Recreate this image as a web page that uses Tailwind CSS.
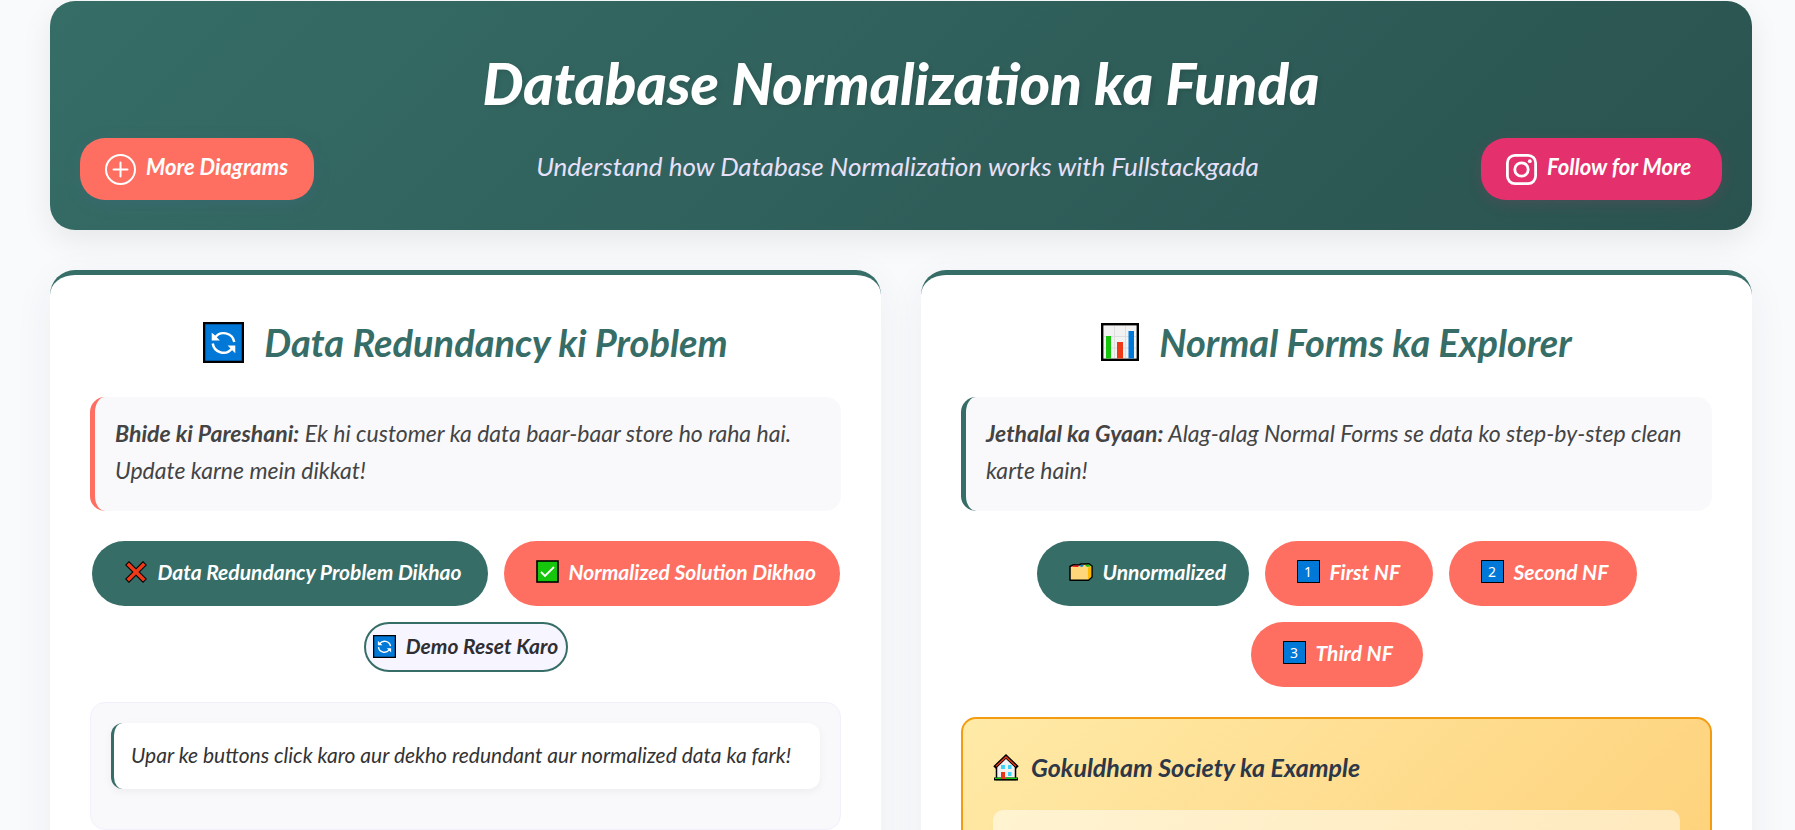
<!DOCTYPE html>
<html lang="hi-Latn">
<head>
<meta charset="utf-8">
<meta name="viewport" content="width=device-width, initial-scale=1">
<title>Database Normalization ka Funda</title>
<script src="https://cdn.jsdelivr.net/npm/@tailwindcss/browser@4"></script>
</head>
<body class="h-screen overflow-hidden bg-[#f9fafc] pt-px pr-[43px] pl-[50px] [font-family:Lato,sans-serif] text-[#333333] italic">

<svg class="hidden" aria-hidden="true">
  <symbol id="refresh" viewBox="0 0 40 40">
    <rect x="1" y="1" width="38" height="38" fill="#0078d7" stroke="#000" stroke-width="2.4"/>
    <path d="M11.500 15.500A10.500 10.500 0 0 1 30.500 19.500M9.500 21A10.500 10.500 0 0 0 28.500 25.500" fill="none" stroke="#fff" stroke-width="2.400"/>
    <path d="M8.500 10.500L11 12.500L16.500 18H8.500Z M31.500 30.500L29 28L24 23H31.500Z" fill="#fff"/>
  </symbol>
</svg>

<header class="flex h-[229px] flex-col rounded-[25px] bg-linear-135 from-[#366d67] to-[#2a534f] px-[30px] pt-12 shadow-[0_10px_30px_rgba(0,0,0,0.08)]">
  <h1 class="text-center text-[58px] leading-[68px] font-black text-white [text-shadow:2px_2px_4px_rgba(0,0,0,0.1)]">Database Normalization ka Funda</h1>
  <div class="mt-[21px] flex items-center justify-between">
    <a href="#diagrams" class="flex h-[62px] w-[234px] items-center gap-[10px] rounded-[25px] bg-[#ff6f61] px-[25px] text-[22px] font-bold whitespace-nowrap text-white shadow-[0_4px_15px_rgba(66,108,140,0.3)]">
      <svg class="size-[31px] shrink-0" viewBox="0 0 31 31" fill="none" stroke="#fff" stroke-width="2" stroke-linecap="round"><circle cx="15.500" cy="15.500" r="14.500"/><path d="M15.500 8.500V22.500M8.500 15.500H22.500"/></svg>
      <span class="pb-1.5">More Diagrams</span>
    </a>
    <p class="pb-1.5 text-[26px] leading-8 text-[#e6e0fa]">Understand how Database Normalization works with Fullstackgada</p>
    <a href="#follow" class="flex h-[62px] w-[241px] items-center gap-[10px] rounded-[25px] bg-[#e4306c] px-[25px] text-[22px] font-bold whitespace-nowrap text-white shadow-[0_4px_15px_rgba(228,48,108,0.15)]">
      <svg class="size-[31px] shrink-0" viewBox="0 0 31 31" fill="none" stroke="#fff" stroke-width="2.800"><rect x="1.400" y="1.400" width="28.200" height="28.200" rx="7.500"/><circle cx="15.500" cy="15.500" r="6.700"/><circle cx="23.800" cy="7.200" r="1.900" fill="#fff" stroke="none"/></svg>
      <span class="pb-1.5">Follow for More</span>
    </a>
  </div>
</header>

<main class="mt-10 grid grid-cols-2 gap-10">

  <section class="h-[900px] rounded-[25px] border-t-[5px] border-[#366d67] bg-white px-10 pt-10 shadow-[0_10px_40px_rgba(30,50,70,0.06)]">
    <h2 class="flex h-[54px] items-center justify-center gap-5 text-[38px] leading-[54px] font-bold text-[#366d67]">
      <svg class="size-[41px]" aria-hidden="true"><use href="#refresh"/></svg>
      Data Redundancy ki Problem
    </h2>

    <p class="mt-7 rounded-[15px] border-l-[5px] border-[#ff6f61] bg-[#f9f9fc] px-5 pt-[18px] pb-[22px] text-[23px] leading-[37px] text-[#444444]"><strong>Bhide ki Pareshani:</strong> Ek hi customer ka data baar-baar store ho raha hai. Update karne mein dikkat!</p>

    <div class="mt-[30px] flex flex-wrap items-start justify-center gap-4 text-[21px] font-bold whitespace-nowrap">
      <button class="flex h-[65px] w-[396px] items-center gap-[10px] rounded-full bg-[#366d67] pr-6 pb-1 pl-8 text-white">
        <svg class="size-6 shrink-0" viewBox="0 0 24 24" aria-hidden="true"><path d="M3 3L21 21M21 3L3 21" stroke="#000" stroke-width="5.500"/><path d="M3.700 3.700L20.300 20.300M20.300 3.700L3.700 20.300" stroke="#f03a17" stroke-width="3.400"/></svg>
        Data Redundancy Problem Dikhao
      </button>
      <button class="flex h-[65px] w-[336px] items-center gap-[10px] rounded-full bg-[#ff6f61] pr-6 pb-1 pl-8 text-white">
        <svg class="size-[23px] shrink-0" viewBox="0 0 23 23" aria-hidden="true"><rect x="1" y="1" width="21" height="21" fill="#16c60c" stroke="#000" stroke-width="1.600"/><path d="M5 12L9 16L18 7" fill="none" stroke="#fff" stroke-width="1.800"/></svg>
        Normalized Solution Dikhao
      </button>
      <button class="flex h-[50px] w-[204px] items-center justify-center gap-[10px] rounded-full border-2 border-[#366d67] bg-[#f7f5ff] pb-[2px] text-[#2f2f33]">
        <svg class="size-[23px] shrink-0" aria-hidden="true"><use href="#refresh"/></svg>
        Demo Reset Karo
      </button>
    </div>

    <div class="mt-[30px] h-32 rounded-[15px] border border-[#f2f0fc] bg-[#f9f9fc] p-5">
      <p class="rounded-xl border-l-[3px] border-[#366d67] bg-white px-[17px] pt-4 pb-[18px] text-[21px] leading-8 whitespace-nowrap shadow-[0_3px_10px_rgba(0,0,0,0.05)]">Upar ke buttons click karo aur dekho redundant aur normalized data ka fark!</p>
    </div>
  </section>

  <section class="h-[900px] rounded-[25px] border-t-[5px] border-[#366d67] bg-white px-10 pt-10 shadow-[0_10px_40px_rgba(30,50,70,0.06)]">
    <h2 class="flex h-[54px] items-center justify-center gap-5 text-[38px] leading-[54px] font-bold text-[#366d67]">
      <svg class="size-[38px]" viewBox="0 0 38 38" aria-hidden="true"><rect x="1.200" y="1.200" width="35.600" height="35.600" fill="#f2f2f2" stroke="#000" stroke-width="2.400"/><path d="M13.500 3V35M24.500 3V35M3 13.500H35M3 25H35" stroke="#dedede" stroke-width="1"/><path d="M5 13H10V35.500H5Z" fill="#16c60c"/><path d="M16 19H22V35.500H16Z" fill="#f03a17"/><path d="M27.500 8H33V35.500H27.500Z" fill="#0078d7"/></svg>
      Normal Forms ka Explorer
    </h2>

    <p class="mt-7 rounded-[15px] border-l-[5px] border-[#366d67] bg-[#f9f9fc] px-5 pt-[18px] pb-[22px] text-[23px] leading-[37px] text-[#444444]"><strong>Jethalal ka Gyaan:</strong> Alag-alag Normal Forms se data ko step-by-step clean karte hain!</p>

    <div class="mt-[30px] flex flex-wrap items-start justify-center gap-4 text-[21px] font-bold whitespace-nowrap text-white">
      <button class="flex h-[65px] w-[212px] items-center gap-[10px] rounded-full bg-[#366d67] pr-6 pb-1 pl-8">
        <svg class="h-[18px] w-6 shrink-0" viewBox="0 0 24 18" aria-hidden="true"><path d="M1 3.500L4 1.800L10 2L12 1H15L20 .8L23 3V14L19.500 17.200H1Z" fill="#ffd679" stroke="#000" stroke-width="1.500" stroke-linejoin="round"/><path d="M2.500 3.800L5 2.500H10L9 4Z" fill="#e81224"/><path d="M10 3L12.500 1.800L15 2.600L13 4Z" fill="#0078d7"/><path d="M16 2L20 1.600L22 3.200L18 4Z" fill="#16c60c"/><path d="M19 4.500L22.200 3.600V13.800L19 16.400Z" fill="#ffb900"/></svg>
        Unnormalized
      </button>
      <button class="flex h-[65px] w-[168px] items-center gap-[10px] rounded-full bg-[#ff6f61] pr-6 pb-1 pl-8">
        <span class="flex size-[23px] shrink-0 items-center justify-center border border-black bg-[#0078d7] [font-family:'Noto_Sans',sans-serif] text-[14px] leading-none font-normal not-italic">1</span>
        First NF
      </button>
      <button class="flex h-[65px] w-[188px] items-center gap-[10px] rounded-full bg-[#ff6f61] pr-6 pb-1 pl-8">
        <span class="flex size-[23px] shrink-0 items-center justify-center border border-black bg-[#0078d7] [font-family:'Noto_Sans',sans-serif] text-[14px] leading-none font-normal not-italic">2</span>
        Second NF
      </button>
      <button class="flex h-[65px] w-[172px] items-center gap-[10px] rounded-full bg-[#ff6f61] pr-6 pb-1 pl-8">
        <span class="flex size-[23px] shrink-0 items-center justify-center border border-black bg-[#0078d7] [font-family:'Noto_Sans',sans-serif] text-[14px] leading-none font-normal not-italic">3</span>
        Third NF
      </button>
    </div>

    <div class="mt-[30px] h-[400px] rounded-[15px] border-2 border-[#f39c12] bg-linear-135 from-[#ffeaa7] to-[#fdcb6e] px-[30px] pt-[30px]">
      <h3 class="flex items-center gap-3 text-[25px] leading-9 font-bold text-[#2d3748]">
        <svg class="h-[27px] w-[26px]" viewBox="0 0 26 27" aria-hidden="true"><path d="M3.500 12V25.500H22.500V12L13 3Z" fill="#f2f2f2" stroke="#000" stroke-width="1.500"/><path d="M1.500 13.500L13 2.500L24.500 13.500" fill="none" stroke="#000" stroke-width="3.600"/><path d="M3 12.300L13 3L23 12.300" fill="none" stroke="#f03a17" stroke-width="1.300"/><path d="M1 23.500H25V26.500H1Z" fill="#000"/><path d="M2 23.600H24V25H2Z" fill="#16c60c"/><path d="M8 18H12V25H8Z" fill="#e8351c"/><path d="M8 11H12V15H8ZM15 11H18.500V15H15ZM15 18H18.500V22H15Z" fill="#3fd2f5"/></svg>
        Gokuldham Society ka Example
      </h3>
      <div class="mt-[25px] h-[220px] rounded-[10px] bg-white/50"></div>
    </div>
  </section>
</main>
</body>
</html>
